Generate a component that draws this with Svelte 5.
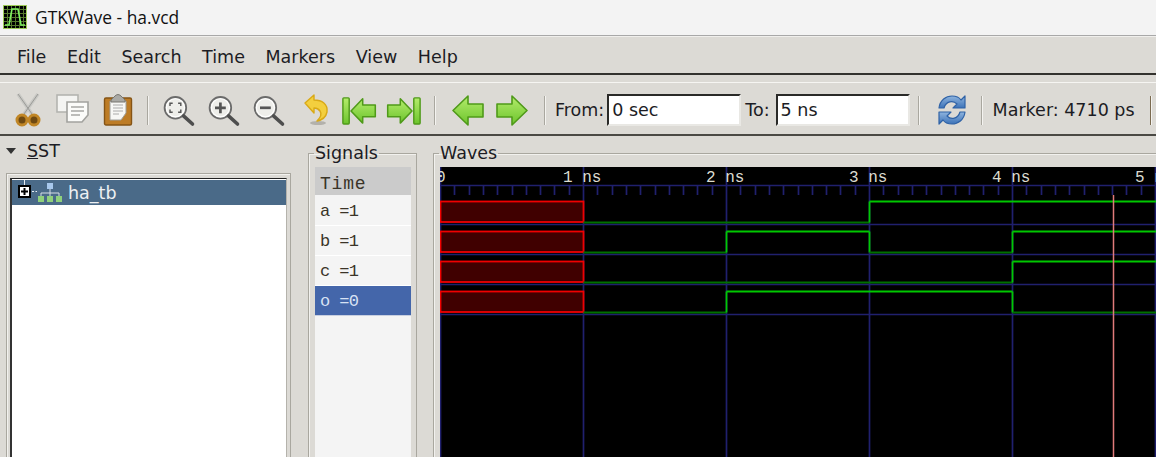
<script lang="ts">
  // GTKWave main window: title bar, menu, toolbar, then the SST / Signals / Waves panes.
  const menus = ['File', 'Edit', 'Search', 'Time', 'Markers', 'View', 'Help'];

  const signals = [
    { name: 'a =1' },
    { name: 'b =1' },
    { name: 'c =1' },
    { name: 'o =0', selected: true },
  ];

  // wave canvas geometry, in page pixels minus the canvas origin (440,167)
  const W = 716;
  const H = 290;
  const nsPx = 143;
  const majors = [0, 1, 2, 3, 4, 5].map((n) => n * nsPx);
  const ticks = Array.from({ length: 50 }, (_, i) => i * 14.3).filter((_, i) => i % 10 !== 0);
  const rowLines = [57, 87, 117, 147];

  // level over time: [nanosecond where it changes, new level]
  const traces = [
    { top: 34, edges: [[1, 0], [3, 1]] },
    { top: 64, edges: [[1, 0], [2, 1], [3, 0], [4, 1]] },
    { top: 94, edges: [[1, 0], [4, 1]] },
    { top: 124, edges: [[1, 0], [2, 1], [4, 0]] },
  ];
  const rowH = 21;

  function segments(t: { top: number; edges: number[][] }) {
    const out: { x1: number; y1: number; x2: number; y2: number; hi: boolean }[] = [];
    t.edges.forEach(([at, lvl], i) => {
      const x = at * nsPx;
      const end = i + 1 < t.edges.length ? t.edges[i + 1][0] * nsPx : W;
      const y = lvl ? t.top : t.top + rowH;
      out.push({ x1: x, y1: y, x2: end, y2: y, hi: !!lvl });
      if (i + 1 < t.edges.length) out.push({ x1: end, y1: t.top, x2: end, y2: t.top + rowH, hi: true });
    });
    return out;
  }
</script>

{#snippet lens(kind: string)}
  <svg width="36" height="33" viewBox="0 0 40 36">
    <circle cx="16" cy="15" r="12" fill="#eeeeea" stroke="#6b6b6b" stroke-width="2" />
    <circle cx="16" cy="15" r="10" fill="none" stroke="#fff" stroke-width="1.2" />
    <path d="M25 24 L35 33" stroke="#4e4e4e" stroke-width="4" stroke-linecap="round" />
    {#if kind === 'fit'}
      <path d="M10 13 V10 H13 M19 10 H22 V13 M22 17 V20 H19 M13 20 H10 V17" fill="none" stroke="#555" stroke-width="1.6" />
    {:else if kind === 'in'}
      <path d="M10 15 H22 M16 9 V21" stroke="#555" stroke-width="3" />
    {:else}
      <path d="M10 15 H22" stroke="#555" stroke-width="3" />
    {/if}
  </svg>
{/snippet}

{#snippet arrow(flip: boolean, bar: boolean)}
  <svg width={bar ? 36 : 40} height={bar ? 29 : 32} viewBox="0 0 40 32" class:flip>
    {#if bar}
      <rect x="1" y="2" width="7" height="29" rx="1" fill="url(#grn)" stroke="#4f9a19" stroke-width="1.6" />
      <path d="M10 16.5 L23 3 V10 H37 V23 H23 V30 Z" fill="url(#grn)" stroke="#4f9a19" stroke-width="1.7" stroke-linejoin="round" />
    {:else}
      <path d="M5 16.5 L20 2 V10 H35 V23 H20 V31 Z" fill="url(#grn)" stroke="#4f9a19" stroke-width="1.6" stroke-linejoin="round" />
    {/if}
  </svg>
{/snippet}

<div class="window">
  <svg width="0" height="0" class="defs">
    <defs>
      <linearGradient id="grn" x1="0" y1="0" x2="0" y2="1">
        <stop offset="0" stop-color="#b4ec6c" />
        <stop offset="1" stop-color="#6cc42c" />
      </linearGradient>
      <linearGradient id="blu" x1="0" y1="0" x2="0" y2="1">
        <stop offset="0" stop-color="#8fb4de" />
        <stop offset="1" stop-color="#3c72b8" />
      </linearGradient>
    </defs>
  </svg>

  <header class="titlebar">
    <svg class="appicon" width="24" height="24" viewBox="0 0 24 24">
      <rect x="0.5" y="0.5" width="23" height="23" fill="#000" stroke="#9ecb58" />
      <path d="M4.5 1 V23 M8.5 1 V23 M12.5 1 V23 M16.5 1 V23 M20.5 1 V23 M1 4.5 H23 M1 8.5 H23 M1 12.5 H23 M1 16.5 H23 M1 20.5 H23" stroke="#55782c" />
      <path d="M2 20 H6 L9 4 H15 L18 20 H22" fill="none" stroke="#7cf060" stroke-width="1.6" />
    </svg>
    <span>GTKWave - ha.vcd</span>
  </header>

  <nav class="menubar">
    {#each menus as m}
      <span>{m}</span>
    {/each}
  </nav>

  <div class="toolbar">
    <div class="tool">
      <svg width="30" height="34" viewBox="0 0 30 34">
        <path d="M5 1 L19 21 M25 1 L11 21" stroke="#c9c9c5" stroke-width="3.6" />
        <path d="M5 1 L19 21 M25 1 L11 21" stroke="#8e8e8a" stroke-width="0.8" />
        <circle cx="9" cy="27" r="5" fill="#6f4a12" stroke="#c08626" stroke-width="3" />
        <circle cx="21" cy="27" r="5" fill="#6f4a12" stroke="#c08626" stroke-width="3" />
      </svg>
    </div>
    <div class="tool">
      <svg width="34" height="32" viewBox="0 0 34 32">
        <rect x="1" y="1" width="21" height="17" fill="#f4f4f2" stroke="#b4b4b0" stroke-width="1.6" />
        <path d="M11 8 H32 V21 L26 28 H11 Z" fill="#fbfbf9" stroke="#a2a29e" stroke-width="1.6" />
        <path d="M15 13 H28 M15 17 H28 M15 21 H24" stroke="#a8a8a4" stroke-width="1.4" />
      </svg>
    </div>
    <div class="tool">
      <svg width="30" height="34" viewBox="0 0 30 34">
        <rect x="1.5" y="5" width="27" height="27" rx="1.5" fill="#bd7c26" stroke="#855415" stroke-width="1.4" />
        <path d="M7 8 H23 V20 L18 27 H7 Z" fill="#f7f7f5" stroke="#9e9e9a" />
        <path d="M10 12 H20 M10 15 H20 M10 18 H20 M10 21 H16" stroke="#aaa" />
        <path d="M8 7 L11 4 Q15 -1 19 4 L22 7 V9 H8 Z" fill="#a9a9a5" stroke="#77756f" />
      </svg>
    </div>
    <i class="sep"></i>
    <div class="tool">{@render lens('fit')}</div>
    <div class="tool">{@render lens('in')}</div>
    <div class="tool">{@render lens('out')}</div>
    <i class="sep undo-gap"></i>
    <div class="tool">
      <svg width="28" height="32" viewBox="0 0 28 32">
        <ellipse cx="16" cy="29" rx="8" ry="2" fill="#b3b1ab" />
        <path d="M3 9 L12 1 V6 C20 6 26 10 25 18 C24 23 20 26 15 27 C19 23 20 20 18 17 C16 14 14 14 12 14 V19 Z" fill="#f3cf3e" stroke="#d9a916" stroke-width="1.4" stroke-linejoin="round" />
      </svg>
    </div>
    <div class="tool nav">{@render arrow(false, true)}</div>
    <div class="tool nav">{@render arrow(true, true)}</div>
    <i class="sep wide"></i>
    <div class="tool nav2">{@render arrow(false, false)}</div>
    <div class="tool nav2">{@render arrow(true, false)}</div>
    <i class="sep wide before-from"></i>
    <label class="field from">From:<input value="0 sec" readonly /></label>
    <label class="field to">To:<input value="5 ns" readonly /></label>
    <i class="sep after-inputs"></i>
    <div class="tool">
      <svg width="30" height="32" viewBox="0 0 30 32">
        <path d="M2 14 C3 6 9 2 15 2 C19 2 22 3 24 6 L28 2 V14 H16 L20 10 C16 6 9 7 7 14 Z" fill="url(#blu)" stroke="#2f62a6" stroke-width="1.2" stroke-linejoin="round" />
        <path d="M28 18 C27 26 21 30 15 30 C11 30 8 29 6 26 L2 30 V18 H14 L10 22 C14 26 21 25 23 18 Z" fill="url(#blu)" stroke="#2f62a6" stroke-width="1.2" stroke-linejoin="round" />
      </svg>
    </div>
    <i class="sep before-marker"></i>
    <span class="marker">Marker: 4710 ps</span>
    <i class="sep last"></i>
  </div>

  <main class="panes">
    <section class="sst">
      <div class="sst-head"><i class="tri"></i><span><u>S</u>ST</span></div>
      <div class="sst-frame">
        <div class="tree">
          <div class="tree-row">
            <svg class="expander" width="20" height="25" viewBox="0 0 20 25">
              <path d="M7.5 0 V5 M15 11.5 H17 M18.5 11.5 H20" stroke="#e8edf2" />
              <rect x="1" y="5" width="13" height="13" fill="#000" />
              <rect x="3" y="7" width="9" height="9" fill="#fff" />
              <path d="M4 11.5 H11 M7.5 8 V15" stroke="#000" stroke-width="2" />
            </svg>
            <svg width="26" height="20" viewBox="0 0 26 20">
              <path d="M13 6 V10 M4 13 V10 H22 V13 M13 10 V13" fill="none" stroke="#d6dee6" />
              <rect x="10" y="0" width="6" height="6" fill="#a8c8ec" />
              <rect x="1" y="13" width="6" height="6" fill="#8fd07c" />
              <rect x="10" y="13" width="6" height="6" fill="#8fd07c" />
              <rect x="19" y="13" width="6" height="6" fill="#8fd07c" />
            </svg>
            <span class="tree-label">ha_tb</span>
          </div>
        </div>
      </div>
    </section>

    <fieldset class="group signals">
      <legend>Signals</legend>
      <div class="list">
        <div class="time">Time</div>
        {#each signals as s}
          <div class="sig" class:selected={s.selected}>{s.name}</div>
        {/each}
      </div>
    </fieldset>

    <fieldset class="group waves">
      <legend>Waves</legend>
      <svg class="canvas" width={W} height={H} viewBox="0 0 {W} {H}">
        <rect width={W} height={H} fill="#000" />
        <line x1="0" x2={W} y1="18.5" y2="18.5" class="grid" />
        {#each rowLines as y}
          <line x1="0" x2={W} y1={y + 0.5} y2={y + 0.5} class="grid" />
        {/each}
        {#each majors as x}
          <line x1={x + 0.5} x2={x + 0.5} y1="0" y2={H} class="grid" />
        {/each}
        {#each ticks as x}
          <line x1={Math.round(x) + 0.5} x2={Math.round(x) + 0.5} y1="19" y2="28" class="grid" />
        {/each}

        <text x="-4" y="15" class="ruler">0</text>
        {#each [1, 2, 3, 4, 5] as n}
          <text x={n * nsPx - 20} y="15" class="ruler">{n} ns</text>
        {/each}

        {#each traces as t}
          <rect x="0.5" y={t.top + 0.5} width={nsPx} height={rowH - 0.5} fill="#400000" stroke="#f00000" stroke-width="1.8" />
          {#each segments(t) as s}
            <line x1={s.x1 + 0.5} x2={s.x2 + 0.5} y1={s.y1 + 0.5} y2={s.y2 + 0.5} stroke={s.hi ? '#00c800' : '#007000'} stroke-width="1.8" />
          {/each}
        {/each}

        <line x1="673.5" x2="673.5" y1="28" y2={H} stroke="#e07a7a" stroke-width="1.5" />
      </svg>
    </fieldset>
  </main>
</div>

<style>
  :global(body) { margin: 0; background: #fff; overflow: hidden; }
  .window {
    width: 1156px;
    height: 457px;
    display: flex;
    flex-direction: column;
    overflow: hidden;
    background: #dcdad5;
    color: #1c1c24;
    font-family: "DejaVu Sans", sans-serif;
    font-size: 17.5px;
  }
  .defs { position: absolute; }

  .titlebar {
    flex: none;
    height: 33px;
    display: flex;
    align-items: center;
    gap: 8px;
    padding: 0 0 2px 2px;
    background: #f3f3f3;
    border-bottom: 1px solid #a8a8a8;
    font-family: "Open Sans", sans-serif;
    font-size: 17.4px;
    color: #111;
  }
  .appicon { margin-left: 1px; }

  .menubar {
    flex: none;
    height: 33px;
    padding-top: 3px;
    display: flex;
    align-items: center;
    gap: 20.6px;
    padding-left: 17px;
    border-top: 1px solid #f0efec;
    border-bottom: 2px solid #33322e;
  }

  .toolbar {
    flex: none;
    height: 48px;
    padding-top: 3px;
    margin-top: 7px;
    display: flex;
    align-items: center;
    padding-left: 5px;
    border-top: 1px solid #f6f5f2;
    border-bottom: 2px solid #4a4944;
  }
  .tool { flex: none; width: 45px; display: flex; justify-content: center; align-items: center; }
  .tool.nav { width: 43px; }
  .tool.nav2 { width: 44px; }
  .flip { transform: scaleX(-1); }
  .sep {
    flex: none;
    width: 1px;
    height: 29px;
    margin: 0 7px;
    background: #a9a79f;
    border-right: 1px solid #f4f3f0;
  }
  .sep.wide { margin: 0 10px 0 10px; }
  .sep.before-from { margin-right: 9px; }
  .undo-gap { background: transparent; border: 0; margin: 0 1px 0 0; }
  .after-inputs { margin-left: 8px; margin-right: 10px; }
  .before-marker { margin-left: 6px; margin-right: 10px; }
  .field { display: flex; align-items: center; gap: 3px; }
  .to { margin-left: 4px; gap: 6px; }
  .to input { width: 125px; }
  .field input {
    width: 124px;
    height: 28px;
    padding: 0 3px 0 3px;
    font: inherit;
    color: #1c1c24;
    background: #fff;
    border: 2px solid #e9e8e4;
    border-top-color: #2a2a28;
    border-left-color: #2a2a28;
    outline: none;
  }
  .marker { white-space: nowrap; }
  .last { margin-left: 15px; background: #7a6a50; }

  .panes { flex: 1; min-height: 0; display: flex; position: relative; overflow: hidden; }

  .sst { flex: none; width: 292px; display: flex; flex-direction: column; }
  .sst-head { height: 37px; flex: none; display: flex; align-items: center; gap: 11px; padding: 0 0 8px 6px; box-sizing: border-box; }
  .tri {
    width: 0;
    height: 0;
    border: 5px solid transparent;
    border-top: 6px solid #333;
    border-bottom: 0;
  }
  .sst-frame {
    flex: 1;
    margin-left: 6px;
    margin-right: 1px;
    padding: 4px 3px 0 3px;
    border: 1px solid #a9a79f;
    border-bottom: 0;
    box-shadow: inset 1px 1px 0 #f2f1ee;
  }
  .tree {
    height: 100%;
    box-sizing: border-box;
    padding-top: 1px;
    background: #fff;
    border-top: 1px solid #222;
    border-left: 2px solid #333;
    border-right: 1px solid #b5b3ac;
  }
  .tree-row {
    height: 25px;
    display: flex;
    align-items: center;
    padding-left: 5px;
    background: #4a6a88;
    color: #edf0f3;
    font-size: 17.5px;
  }
  .expander { flex: none; }
  .tree-label { margin-left: 5px; }

  .group {
    margin: 8px 0 0 0;
    padding: 0;
    border: 1px solid #a9a79f;
    border-bottom: 0;
    box-shadow: inset 1px 1px 0 #f2f1ee;
    min-width: 0;
    box-sizing: border-box;
  }
  .group legend { padding: 0 1px; margin-left: 5px; line-height: 18px; }
  .signals { flex: none; width: 109px; margin-left: 16px; height: 330px; }
  .list {
    margin: 5px 5px 0 6px;
    height: 300px;
    background: #f4f4f4;
    font-family: "Liberation Mono", monospace;
    font-size: 17px;
    color: #3a3428;
    font-weight: 400;
  }
  .time {
    height: 28px;
    line-height: 35px;
    padding-left: 5px;
    background: #cbcbcb;
    font-size: 18px;
    letter-spacing: 0.8px;
    margin-bottom: 1px;
  }
  .sig {
    height: 29px;
    line-height: 31px;
    padding-left: 5px;
    letter-spacing: -0.6px;
    border-bottom: 1px solid #fff;
  }
  .sig.selected { background: #4466aa; color: #d8e2f4; border-bottom-color: #c8cfe0; }

  .waves { flex: 1; margin-left: 16px; margin-right: -2px; height: 330px; }
  .canvas { display: block; margin: 5px 0 0 6px; }
  .canvas .grid { stroke: #20206e; stroke-width: 1.7; }
  .ruler { font-family: "Liberation Mono", monospace; font-size: 16px; fill: #dcdcd0; }
</style>
